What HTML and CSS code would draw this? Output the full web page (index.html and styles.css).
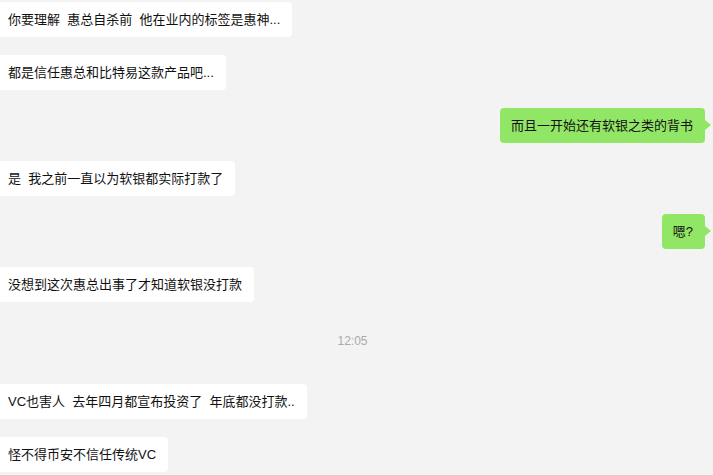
FILE: index.html
```html
<!DOCTYPE html>
<html lang="zh-CN">
<head>
    <meta charset="UTF-8">
    <meta name="viewport" content="width=device-width, initial-scale=1.0">
    <title>聊天记录</title>
    <link rel="stylesheet" href="styles.css">
</head>
<body>
    <div class="chat">
        <div class="row left"><div class="bubble">你要理解&nbsp;&nbsp;惠总自杀前&nbsp;&nbsp;他在业内的标签是惠神...</div></div>
        <div class="row left"><div class="bubble">都是信任惠总和比特易这款产品吧...</div></div>
        <div class="row right"><div class="bubble">而且一开始还有软银之类的背书</div></div>
        <div class="row left"><div class="bubble">是&nbsp;&nbsp;我之前一直以为软银都实际打款了</div></div>
        <div class="row right"><div class="bubble">嗯?</div></div>
        <div class="row left"><div class="bubble">没想到这次惠总出事了才知道软银没打款</div></div>
        <div class="time">12:05</div>
        <div class="row left"><div class="bubble">VC也害人&nbsp;&nbsp;去年四月都宣布投资了&nbsp;&nbsp;年底都没打款..</div></div>
        <div class="row left"><div class="bubble">怪不得币安不信任传统VC</div></div>
    </div>
</body>
</html>
```

FILE: styles.css
```css
body {
    margin: 0;
    background-color: #f3f3f3;
    font-family: "Liberation Sans", "Noto Sans CJK SC", sans-serif;
    font-size: 13px;
    color: #111;
    overflow: hidden;
}
.chat {
    display: flex;
    flex-direction: column;
    gap: 18px;
    padding: 2px 8px 0 0;
}
.row {
    display: flex;
}
.row.right {
    justify-content: flex-end;
}
.bubble {
    position: relative;
    height: 35px;
    box-sizing: border-box;
    padding: 0 12px 0 12px;
    line-height: 35px;
    border-radius: 4px;
    background-color: #fff;
    white-space: nowrap;
}
.left .bubble {
    margin-left: -4px;
}
.right .bubble {
    background-color: #91e765;
    padding: 0 12px 0 11px;
}
.right .bubble::after {
    content: "";
    position: absolute;
    right: -6px;
    top: 12px;
    border-left: 6px solid #91e765;
    border-top: 5px solid transparent;
    border-bottom: 5px solid transparent;
}
.time {
    text-align: center;
    color: #aaa;
    font-size: 12px;
    line-height: 17px;
    margin: 13px 0 16px;
}
```
